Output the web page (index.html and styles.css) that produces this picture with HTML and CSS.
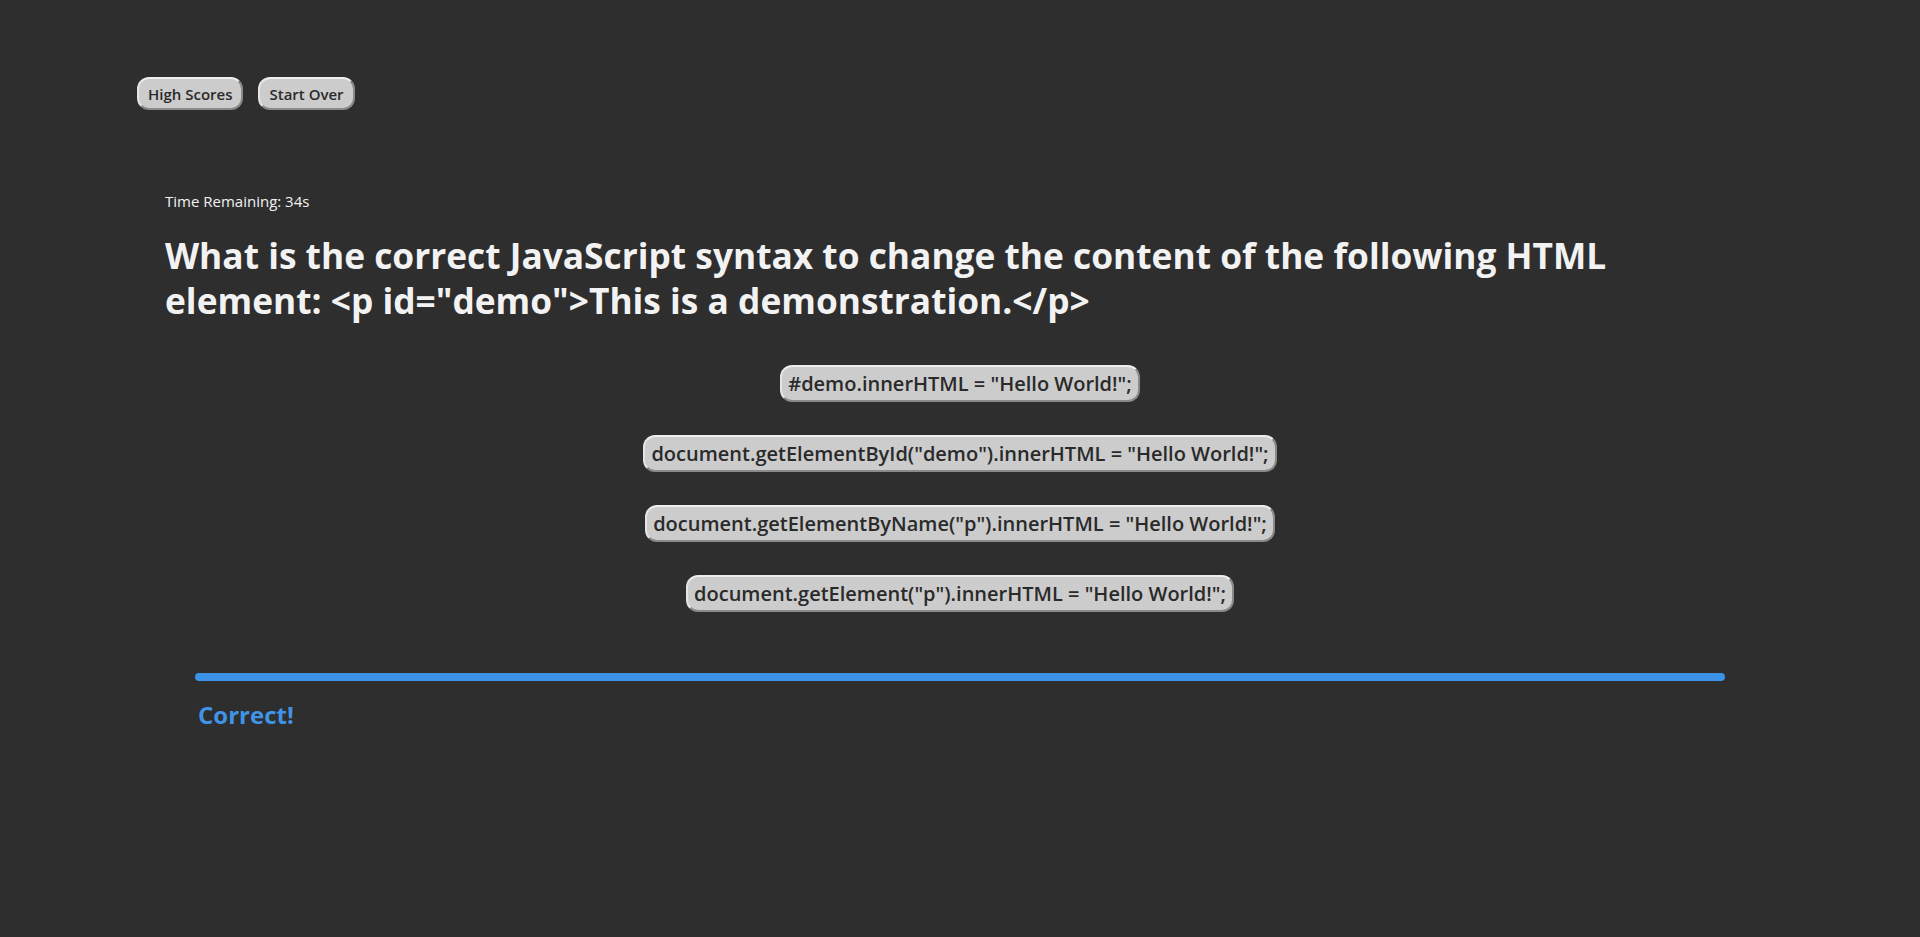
FILE: index.html
```html
<!DOCTYPE html>
<html lang="en">
<head>
<meta charset="utf-8">
<title>Code Quiz</title>
<link rel="stylesheet" href="styles.css">
</head>
<body>
<header class="top-bar">
  <button class="nav-btn">High Scores</button>
  <button class="nav-btn">Start Over</button>
</header>
<main class="quiz">
  <p class="timer">Time Remaining: 34s</p>
  <h1 class="question">What is the correct JavaScript syntax to change the content of the following HTML element: &lt;p id="demo"&gt;This is a demonstration.&lt;/p&gt;</h1>
  <div class="answers">
    <button class="answer-btn">#demo.innerHTML = "Hello World!";</button>
    <button class="answer-btn">document.getElementById("demo").innerHTML = "Hello World!";</button>
    <button class="answer-btn">document.getElementByName("p").innerHTML = "Hello World!";</button>
    <button class="answer-btn">document.getElement("p").innerHTML = "Hello World!";</button>
  </div>
  <div class="result">
    <div class="result-line"></div>
    <p class="result-text">Correct!</p>
  </div>
</main>
</body>
</html>
```
FILE: styles.css
```css
html, body {
  margin: 0;
  padding: 0;
  background: #2e2e2e;
  color: #f2f2f2;
  font-family: "Open Sans", "Noto Sans", sans-serif;
  min-height: 937px;
}

.top-bar {
  display: flex;
  gap: 15px;
  padding: 77px 0 0 137px;
}

.nav-btn,
.answer-btn {
  font-family: inherit;
  background: #cccccc;
  color: #2a2a2a;
  border: 2px solid;
  border-color: #eeeeee #8a8a8a #8a8a8a #e4e4e4;
  border-radius: 12px;
  cursor: pointer;
}

.nav-btn {
  height: 33px;
  padding: 0 9px;
  font-size: 15px;
  font-weight: 600;
}

.quiz {
  padding: 0 165px;
}

.timer {
  margin: 81px 0 0;
  font-size: 15px;
  line-height: 20px;
}

.question {
  margin: 22px 0 0;
  font-size: 35.3px;
  line-height: 45px;
  font-weight: 700;
}

.answers {
  display: flex;
  flex-direction: column;
  align-items: center;
  gap: 33px;
  margin-top: 42px;
}

.answer-btn {
  height: 37px;
  padding: 0 6px;
  font-size: 20px;
  font-weight: 600;
}

.result {
  margin: 61px 30px 0 30px;
}

.result-line {
  height: 8px;
  background: #3d93e8;
  border-radius: 4px;
  width: 1530px;
}

.result-text {
  margin: 17px 0 0 3px;
  font-size: 24px;
  font-weight: 700;
  color: #3f94e6;
}
```
